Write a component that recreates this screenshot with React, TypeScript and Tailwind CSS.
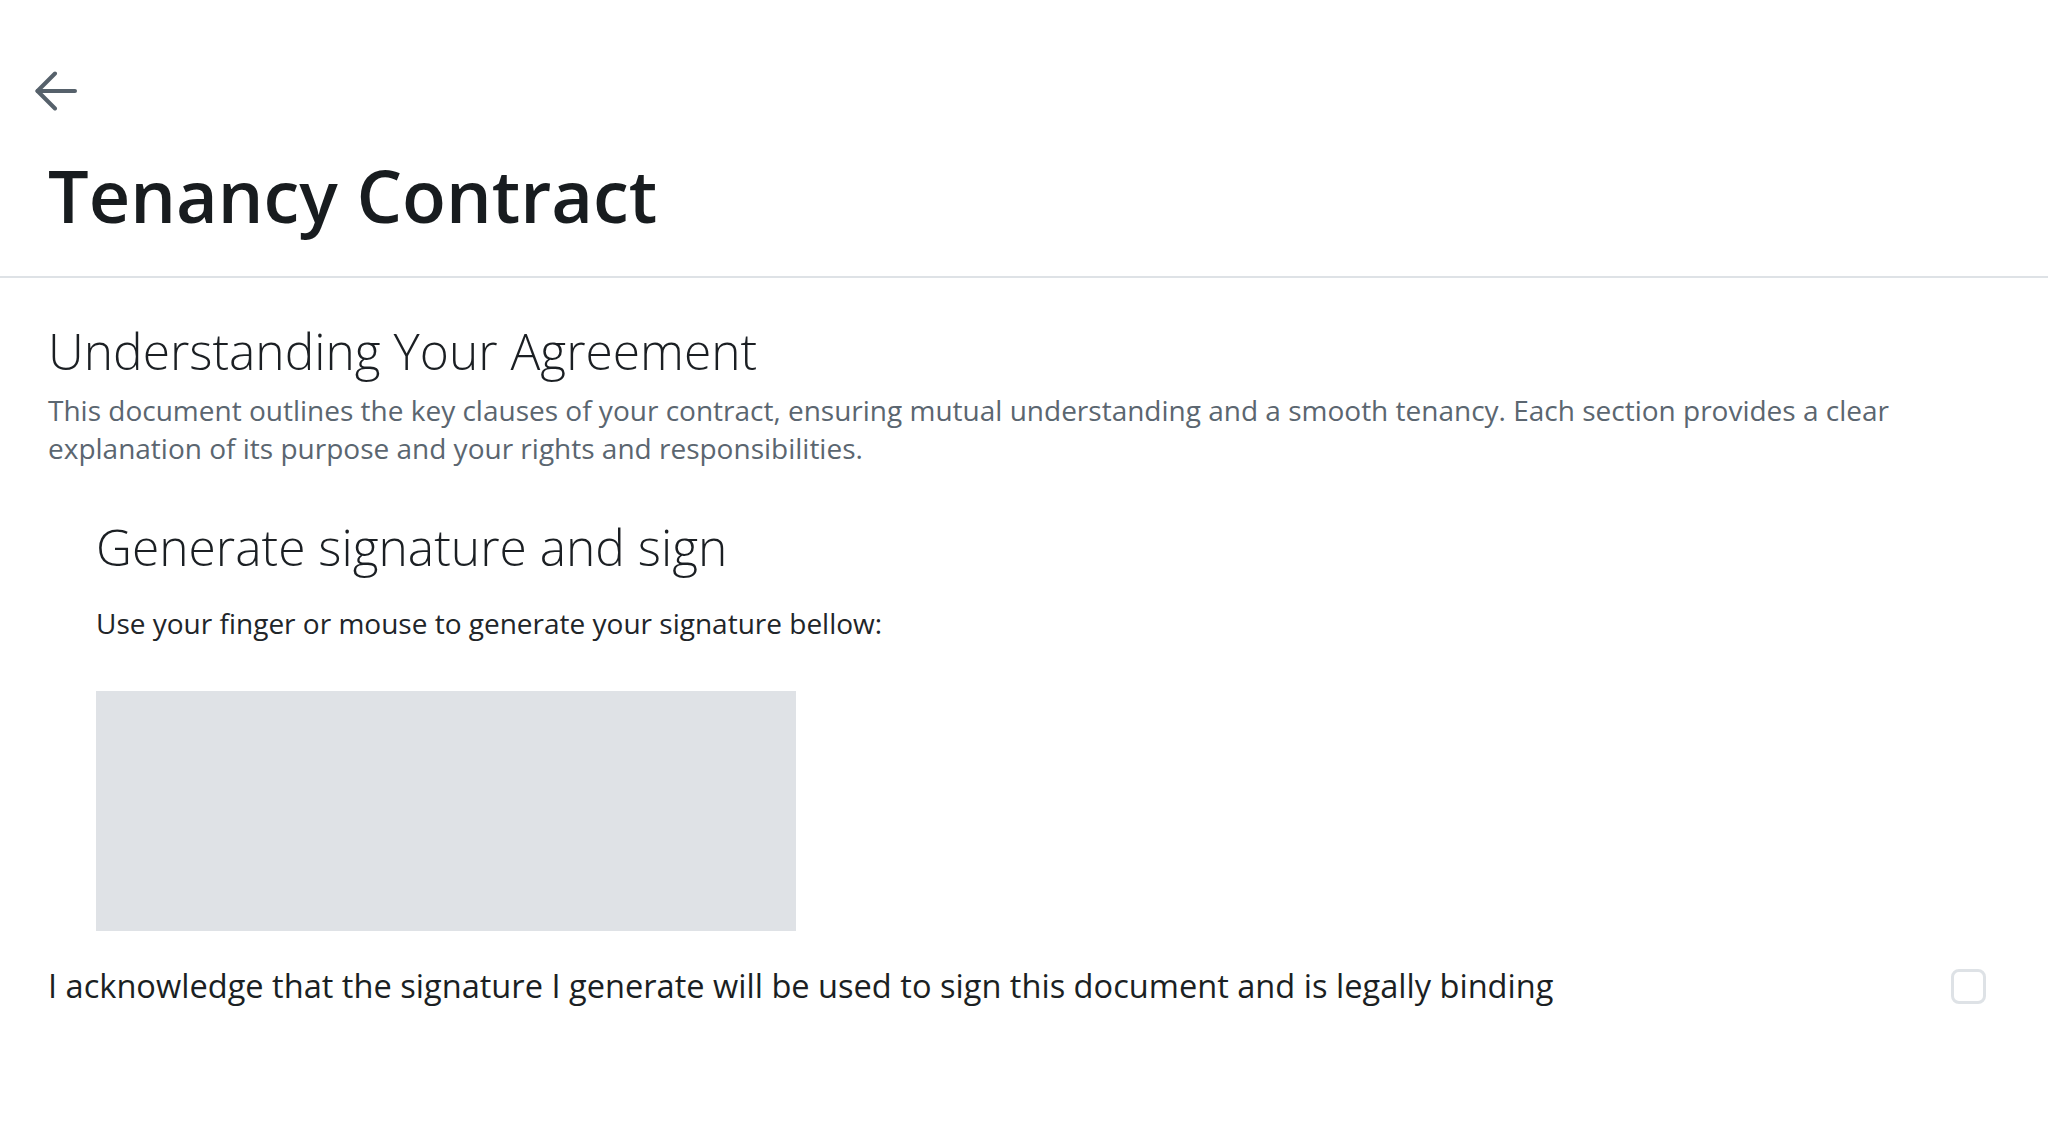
import React, { useState } from "react";

const BackArrow: React.FC = () => (
  <svg width="42" height="40" viewBox="0 0 42 40" fill="none" stroke="#56616b" strokeWidth="4" strokeLinecap="round" strokeLinejoin="round">
    <path d="M40 20H2.5" />
    <path d="M20 2.5 2.5 20 20 37.5" />
  </svg>
);

const App: React.FC = () => {
  const [agreed, setAgreed] = useState(false);

  return (
    <div className="min-h-screen bg-white text-[#1b1f23]" style={{ fontFamily: '"Open Sans", "Liberation Sans", sans-serif' }}>
      {/* Header */}
      <div className="border-b-2 border-[#dee2e6] pb-[45px]">
        <div className="pl-[35px] pt-[71px]">
          <button className="block">
            <BackArrow />
          </button>
        </div>
        <h1 className="mt-[48px] px-12 text-[72px] font-semibold leading-none text-[#181c1f]">
          Tenancy Contract
        </h1>
      </div>

      <div className="px-12 pt-[43px]">
        <h2 className="text-[49.7px] font-light leading-[60px]">Understanding Your Agreement</h2>
        <p className="mt-[10px] text-[28px] leading-[38px] text-[#5b6670]">
          This document outlines the key clauses of your contract, ensuring mutual understanding and a smooth tenancy. Each section provides a clear explanation of its purpose and your rights and responsibilities.
        </p>

        <div className="mt-[50px] pl-12">
          <h3 className="text-[49.7px] font-light leading-[60px]">Generate signature and sign</h3>
          <p className="mt-[27px] text-[28px] leading-[38px] text-[#212529]">
            Use your finger or mouse to generate your signature bellow:
          </p>
          <div className="mt-[49px] h-[240px] w-[700px] bg-[#dfe2e6]" />
        </div>

        <div className="mt-[33px] flex items-center justify-between pr-[14px]">
          <span className="text-[32.6px] leading-[44px] text-[#1b1f23]">
            I acknowledge that the signature I generate will be used to sign this document and is legally binding
          </span>
          <button
            onClick={() => setAgreed(!agreed)}
            className="h-[35px] w-[35px] rounded-[8px] border-[3px] border-[#dee2e6] bg-white"
            aria-checked={agreed}
            role="checkbox"
          />
        </div>
      </div>
    </div>
  );
};

export default App;
